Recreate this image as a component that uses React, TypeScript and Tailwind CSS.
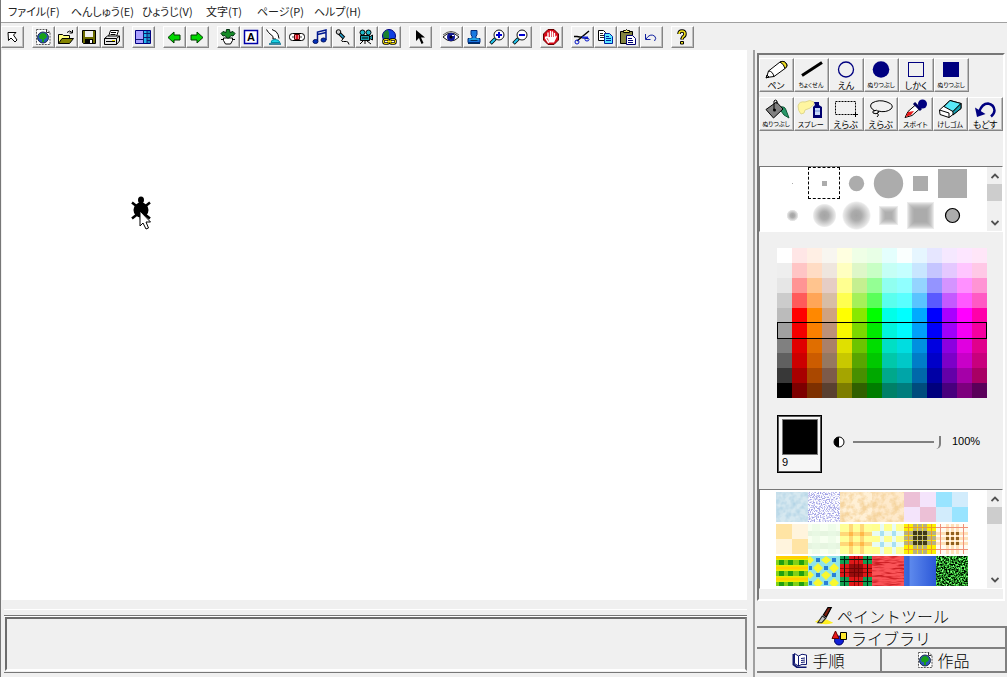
import React, { useState } from "react";

const RAISED =
  "border border-white border-r-[#858585] border-b-[#858585] bg-[#f0f0f0] shadow-[inset_-1px_-1px_0_#bdbdbd] flex items-center justify-center pr-[1px]";

const menus = [
  { label: "ファイル(F)", width: "w-[63px]" },
  { label: "へんしゅう(E)", width: "w-[71px]" },
  { label: "ひょうじ(V)", width: "w-[64px]" },
  { label: "文字(T)", width: "w-[51px]" },
  { label: "ページ(P)", width: "w-[57px]" },
  { label: "ヘルプ(H)", width: "w-[60px]" },
];

const globePage = (
  <>
    <path d="M1.500 .5h10.500l3 3v12h-13.500z" fill="#fff" stroke="#555" strokeDasharray="2 1" />
    <path d="M11.500 .5v3h3" fill="none" stroke="#333" />
    <circle cx="8" cy="8.500" r="5.500" fill="#2858b8" stroke="#203050" />
    <path d="M4 8c0-2 2-4 4-4s4 2 4 4l-2 2H9v3H7v-3H5z" fill="#18a018" />
  </>
);

const magnifier = (
  <>
    <path d="M1.500 14.500L6.500 9.500" stroke="#000" strokeWidth="3.500" />
    <path d="M2 14L6 10" stroke="#22c8f0" strokeWidth="2" />
    <circle cx="10" cy="6" r="5" fill="#fff" stroke="#111" />
  </>
);

// toolbar groups, separated by small gaps
const toolbar: { name: string; icon: React.ReactNode }[][] = [
  [
    {
      name: "うら画面",
      icon: <path d="M4 3.500h8l-2.500 2.500 3.500 5-2 2-4-4-2.500 2.500z" fill="#fff" stroke="#000" />,
    },
  ],
  [
    { name: "新しい作品", icon: globePage },
    {
      name: "ひらく",
      icon: (
        <>
          <path d="M.5 14.500v-9h4l1 1h6v3" fill="#ffff80" stroke="#000" />
          <path d="M.5 14.500l3.500-5h11.500l-4 5z" fill="#848400" stroke="#000" />
          <path d="M9 3.500q3-3 5 0M14.500 1v3h-3" fill="none" stroke="#000" />
        </>
      ),
    },
    {
      name: "ほぞん",
      icon: (
        <>
          <path d="M1.500 1.500h13v13h-12l-1-1z" fill="#6b6b00" stroke="#000" />
          <path d="M4 2h8v6H4z" fill="#f0f0f0" />
          <path d="M4 10h8v5H4z" fill="#000" />
          <path d="M9 11h2v3H9z" fill="#fff" />
        </>
      ),
    },
    {
      name: "いんさつ",
      icon: (
        <>
          <path d="M4.500 7.500l2-6h8l-2 6" fill="#fff" stroke="#000" />
          <path d="M7 3.500h5M6.500 5.500h5" stroke="#000" />
          <path d="M.5 9.500l3-2.500h12v5l-3 3.500H.5z" fill="#e8e8e8" stroke="#000" />
          <path d="M.5 9.500h12v6M12.500 9.500l3-2.500M2 12.500h9" fill="none" stroke="#000" />
          <path d="M8 11h3v1H8z" fill="#e8d800" />
        </>
      ),
    },
  ],
  [
    {
      name: "画面の配置",
      icon: (
        <>
          <path d="M.5 1.500h15v13H.5z" fill="#aaa0ff" stroke="#000080" />
          <path d="M9 2h3v12H9z" fill="#20b8f0" />
          <path d="M12 2h3v12h-3z" fill="#1888c0" />
          <path d="M8.500 2v12M12 2v12M1 10.500h8M9 4.500h6M9 8.500h6M12 11.500h3" stroke="#101870" />
        </>
      ),
    },
  ],
  [
    { name: "まえのページ", icon: <path d="M2 8.500l6-5.500v3h6v5H8v3z" fill="#00d800" stroke="#003800" /> },
    { name: "つぎのページ", icon: <path d="M14 8.500L8 3v3H2v5h6v3z" fill="#00d800" stroke="#003800" /> },
  ],
  [
    {
      name: "タートル",
      icon: (
        <>
          <path d="M3.500 9h9v2.500l-2 3.500h-5l-2-3.500z" fill="#fff" stroke="#000" />
          <path d="M1 10.500h3M12 10.500h3" stroke="#000" />
          <path d="M6.500 .5h3l.5 3 3-1 2 2-2 2.500-2-.5L9 9H7L5 6.500 3 7 1 4.500l2-2 3 1z" fill="#168c28" stroke="#003010" />
        </>
      ),
    },
    {
      name: "テキスト",
      icon: (
        <>
          <path d="M1.500 1.500h13v13h-13z" fill="#fff" stroke="#0000a8" strokeWidth="1.500" />
          <text x="8" y="12" textAnchor="middle" fontSize="11" fontWeight="bold" className="font-['Liberation_Sans',sans-serif]">
            A
          </text>
        </>
      ),
    },
    {
      name: "ボタン",
      icon: (
        <>
          <path d="M2 0l-1 3 7 7h3l2-2-1-4-4-4z" fill="#fff" />
          <path d="M.5 .5l2 3 4.500 4v2.500h3M6 .5l4 2 2 3 1 4" fill="none" stroke="#000" />
          <path d="M5 13.500q0-3 4-3t5 3z" fill="#20d8e8" stroke="#0090a8" />
          <path d="M3 15h12" stroke="#006888" strokeWidth="1.500" />
        </>
      ),
    },
    {
      name: "スライダー",
      icon: (
        <>
          <rect x=".5" y="4.500" width="15" height="7" rx="3" fill="#fff" stroke="#000" />
          <path d="M3 8h10" stroke="#444" />
          <path d="M5.500 5.500h5v5h-5z" fill="#fff" stroke="#500" />
          <path d="M6.500 6h3v4h-3z" fill="#e01020" />
        </>
      ),
    },
    {
      name: "メロディー",
      icon: (
        <>
          <path d="M5.500 12V3l8.500-2v10M5.500 5.500L14 3.500" fill="none" stroke="#001890" strokeWidth="1.500" />
          <ellipse cx="3.500" cy="12.500" rx="2.500" ry="2" fill="#0030b8" stroke="#001060" />
          <ellipse cx="11.500" cy="11" rx="2.500" ry="2" fill="#0030b8" stroke="#001060" />
        </>
      ),
    },
    {
      name: "ろくおん",
      icon: (
        <>
          <path d="M4 4l5 5" stroke="#000" strokeWidth="3.500" />
          <path d="M5 5l3.500 3.500" stroke="#28a8d8" strokeWidth="1.500" />
          <circle cx="3.500" cy="3" r="2.300" fill="#ccc" stroke="#000" />
          <path d="M8.500 9.500q-4 3 0 3h3q2 0 2.500 3" fill="none" stroke="#000" />
        </>
      ),
    },
    {
      name: "ビデオ",
      icon: (
        <>
          <path d="M2.500 6.500h9v5h-9zM11.500 8l3-2v5l-3-1.500" fill="#189cac" stroke="#000" />
          <circle cx="4.500" cy="3.500" r="2.500" fill="#20b8c8" stroke="#000" />
          <circle cx="10.500" cy="3.500" r="2.500" fill="#20b8c8" stroke="#000" />
          <path d="M5 12l-3 3M7 12v3M9 12l4 3M4 9h6" stroke="#000" />
        </>
      ),
    },
    {
      name: "リンク",
      icon: (
        <>
          <circle cx="8" cy="7" r="6.500" fill="#1040e0" stroke="#000080" />
          <path d="M2 7q0-5 5-6l1 3v5l-3 2z" fill="#188030" />
          <rect x="2.500" y="10.500" width="5.500" height="4" rx="1.500" fill="#fff" stroke="#000" strokeWidth="2.500" />
          <rect x="9" y="10.500" width="5.500" height="4" rx="1.500" fill="#fff" stroke="#000" strokeWidth="2.500" />
          <rect x="2.500" y="10.500" width="5.500" height="4" rx="1.500" fill="none" stroke="#f0d800" />
          <rect x="9" y="10.500" width="5.500" height="4" rx="1.500" fill="none" stroke="#f0d800" />
          <path d="M6 12.500h5" stroke="#ffe800" />
        </>
      ),
    },
  ],
  [{ name: "やじるし", icon: <path d="M4 1v11l3-3 2.500 6 2-1L9 8.500h4z" fill="#000" /> }],
  [
    {
      name: "目",
      icon: (
        <>
          <path d="M0 8q8-8 16 0-8 8-16 0z" fill="#fff" stroke="#111" />
          <path d="M0 6q8-7 16 0" fill="none" stroke="#555" />
          <circle cx="8" cy="8" r="4" fill="#101898" />
          <circle cx="8" cy="8" r="1.500" fill="#000" />
          <path d="M9 6h2v1H9z" fill="#fff" />
        </>
      ),
    },
    {
      name: "スタンプ",
      icon: (
        <>
          <path d="M5 1.500h6v4l-1 2v2h4v4H2v-4h4v-2l-1-2z" fill="#1878e0" stroke="#002878" />
          <path d="M2 14.500h12M4.500 11.500h7" stroke="#003060" />
          <path d="M3 10h10" stroke="#28c8e8" />
        </>
      ),
    },
    {
      name: "かくだい",
      icon: (
        <>
          {magnifier}
          <path d="M10 3v6M7 6h6" stroke="#0000d0" strokeWidth="2" />
        </>
      ),
    },
    {
      name: "しゅくしょう",
      icon: (
        <>
          {magnifier}
          <path d="M7 6h6" stroke="#0000d0" strokeWidth="2" />
        </>
      ),
    },
  ],
  [
    {
      name: "すべてとめる",
      icon: (
        <>
          <path d="M5 .5h6L15.500 5v6L11 15.500H5L.5 11V5z" fill="#d80818" stroke="#600" />
          <path
            d="M5.500 13.500L2.500 9q0-2 2.500 0V4M7.500 9V2.500M9.500 9V3M11.500 9V4.500"
            fill="none"
            stroke="#fff"
            strokeWidth="1.400"
            strokeLinecap="round"
          />
          <path d="M4.500 8h7.500l1-1.500q1.500 0 .5 2L11 13.500H6z" fill="#fff" />
        </>
      ),
    },
  ],
  [
    {
      name: "きりとり",
      icon: (
        <>
          <path d="M15 2L3 12M0 7.500h3l11 2" fill="none" stroke="#000" strokeWidth="1.500" />
          <path d="M8 8.500h6" stroke="#1828d8" strokeWidth="2" />
          <circle cx="3" cy="13" r="2" fill="none" stroke="#0010c8" />
          <ellipse cx="13" cy="10.500" rx="2" ry="1.500" fill="none" stroke="#0010c8" />
        </>
      ),
    },
    {
      name: "コピー",
      icon: (
        <>
          <path d="M1.500 1.500h5l2 2v8h-7z" fill="#fff" stroke="#000" />
          <path d="M3 4.500h3M3 6.500h4M3 8.500h4" stroke="#222" />
          <path d="M7.500 4.500h5l3 3v7h-8z" fill="#58e8ff" stroke="#0020a0" />
          <path d="M9 7.500h3M9 9.500h5M9 11.500h5" stroke="#0020a0" />
        </>
      ),
    },
    {
      name: "はりつけ",
      icon: (
        <>
          <path d="M.5 2.500h12v12H.5z" fill="#848440" stroke="#000" />
          <path d="M3.500 3.500h6v-2h-2l-1-1-1 1h-2z" fill="#f0e860" stroke="#000" />
          <path d="M6.500 6.500h6l3 3v6h-9z" fill="#fff" stroke="#000070" />
          <path d="M8 9.500h4M8 11.500h5M8 13.500h5" stroke="#000070" />
        </>
      ),
    },
    {
      name: "もとにもどす",
      icon: <path d="M2.500 5v5.500h5M3 10q4-6 8.500-3 2.500 2 0 5" fill="none" stroke="#1020a0" />,
    },
  ],
  [
    {
      name: "ヘルプ",
      icon: (
        <>
          <path d="M5 5q0-3 3-3t3 3q0 2-2 3l-1 2v.5" fill="none" stroke="#000" strokeWidth="3.500" />
          <path d="M5 5q0-3 3-3t3 3q0 2-2 3l-1 2" fill="none" stroke="#f8e820" strokeWidth="1.500" />
          <path d="M6.500 12.500h3v2.500h-3z" fill="#f8e820" stroke="#000" />
        </>
      ),
    },
  ],
];

// drawn in a 28x20 box above the label
const tools: { label: string; size: string; icon: React.ReactNode }[][] = [
  [
    {
      label: "ペン",
      size: "text-[9px]",
      icon: (
        <>
          <path d="M4.500 17.500l2-6.500L18 2q5-2 7 3 0 2-2 3.500L12 16.500z" fill="#fff" stroke="#000" />
          <path d="M18 2q5-2 7 3 0 2-2 3.500-1-4.500-5-6.500z" fill="#f0e020" stroke="#000" />
          <path d="M6.500 11q4 0 5.500 5.500M4 18l1-3 2 2z" stroke="#000" fill="none" />
        </>
      ),
    },
    { label: "ちょくせん", size: "text-[6px]", icon: <path d="M5 15.500L25 2.500" stroke="#000" strokeWidth="3" /> },
    {
      label: "えん",
      size: "text-[9px]",
      icon: <circle cx="14" cy="9.500" r="7.500" fill="none" stroke="#000080" strokeWidth="1.300" />,
    },
    { label: "ぬりつぶし", size: "text-[6px]", icon: <circle cx="14" cy="9.500" r="8.300" fill="#000080" /> },
    {
      label: "しかく",
      size: "text-[9px]",
      icon: <rect x="6.500" y="2.500" width="15" height="14" fill="none" stroke="#000080" />,
    },
    { label: "ぬりつぶし", size: "text-[6px]", icon: <rect x="6" y="2" width="16" height="15" fill="#000080" /> },
  ],
  [
    {
      label: "ぬりつぶし",
      size: "text-[6px]",
      icon: (
        <>
          <path d="M18 8q5-1 6 3l3 8-5-3-3-4z" fill="#289868" stroke="#105838" />
          <path d="M4 10.500L14.500 3 21 10l-9.500 9z" fill="#808080" stroke="#000" />
          <path d="M12 11V2q1-2 3 0v3" fill="none" stroke="#000" />
          <circle cx="12.500" cy="11" r="1.500" />
        </>
      ),
    },
    {
      label: "スプレー",
      size: "text-[7px]",
      icon: (
        <>
          <path d="M17 3Q13 0 8 3 2 2 1 7q0 5 3 8 4 0 4-4 6-1 9-6z" fill="#fff6a0" stroke="#e0d890" />
          <path d="M17 3h5v3l3 2v11h-9V8l2-2z" fill="#000070" />
          <path d="M18 9h5v7h-5z" fill="#c8d8f8" />
          <path d="M18 12h5" stroke="#7090d8" />
        </>
      ),
    },
    {
      label: "えらぶ",
      size: "text-[9px]",
      icon: (
        <>
          <rect x="3.500" y="2.500" width="20" height="13" fill="none" stroke="#000" strokeDasharray="2 1" />
          <path d="M21 15.500h5M23.500 13v5" stroke="#000" />
        </>
      ),
    },
    {
      label: "えらぶ",
      size: "text-[9px]",
      icon: (
        <>
          <path d="M8 12Q1 8 5 4q7-4 15-1 8 3 4 7-5 4-13 2" fill="none" stroke="#000" />
          <path d="M6 12q4-2 6 1-3 3-6 1 0-2 0-2zM10 14q3 2 0 4" fill="none" stroke="#000" />
        </>
      ),
    },
    {
      label: "スポイト",
      size: "text-[7px]",
      icon: (
        <>
          <path d="M4 18.500l3-6 8-7 4 4-8 7z" fill="#fff" stroke="#000" />
          <path d="M4.500 18l2.500-5 6-1-3 4z" fill="#e81818" />
          <path d="M13 4l7 7" stroke="#000060" strokeWidth="3" />
          <circle cx="21.500" cy="5" r="4.500" fill="#000080" />
        </>
      ),
    },
    {
      label: "けしゴム",
      size: "text-[7px]",
      icon: (
        <>
          <path d="M3.500 11L14 1.500l11 3v5L13 18.500l-9-3z" fill="#fff" stroke="#000" />
          <path d="M8 7.500l6-6 11 3-8 8z" fill="#58e8f8" stroke="#000" />
          <path d="M17 12.500l8-8v5l-8 6.500z" fill="#18a0b0" stroke="#000" />
          <path d="M3.500 11l9.500 3v4.500" fill="none" stroke="#000" />
        </>
      ),
    },
    {
      label: "もどす",
      size: "text-[9px]",
      icon: (
        <>
          <path d="M8 13Q11 4.500 17 4.500q6 1 6.500 7 0 3-3.500 6" fill="none" stroke="#000080" strokeWidth="2.500" />
          <path d="M4 8.500l2 9.500 8.500-3z" fill="#000080" />
        </>
      ),
    },
  ],
];

// one entry per palette row, light to dark
const palette = [
  "ffffff ffe6e6 ffefe4 f8f6f0 ffffe0 efffe6 e8ffe6 e4fffd fafffe e6f6ff e6e6ff f5e8ff fde6ff ffe6f8",
  "eeeeee ffc5c5 ffdcc4 efe6de ffffc0 def7c8 c8ffc5 c5fff5 c5ffff c8e6ff c5c5ff e4c8ff ffc5ff ffc8e6",
  "e6e6e6 ff9494 ffc48e e6cdc5 ffff90 c5ef90 94ff94 90fff0 90ffff 94d4ff 9494ff d494ff ff90ff ff94d4",
  "cccccc ff5a5a ffa557 d8bda5 ffff50 a5f05a 5aff5a 5affee 5affff 5ac4ff 5a5aff c45aff ff5aff ff5ac4",
  "bbbbbb ff0000 ff8800 cfa280 ffff00 88e800 00ff00 00ffe8 00ffff 00aaff 0000ff aa00ff ff00ff ff00aa",
  "a0a0a0 f50000 fa8000 bd9178 f8f800 7cd800 00ea00 00f5dd 00fcff 00a0fa 0000fa a000fa f500f5 f500a0",
  "808080 e00000 e06e00 aa8068 e0e000 6cc400 00dd00 00dfc4 00dde0 0090e0 0000e0 8c00e0 e000e0 e0008c",
  "606060 cc0000 cc5c00 967860 c8c800 58a500 00c800 00c8aa 00c8c8 007dc8 0000c8 7c00c8 c800c8 c8007d",
  "383838 a80000 aa4800 7d5a4a a5a500 488f00 00a800 00a88c 00a5a8 0068aa 0000a5 6400a8 a500a8 a80064",
  "000000 7d0000 7d3000 5a4030 7d7d00 306000 007d00 008068 007d7d 004c7d 00007d 48007d 7d007d 5a005a",
].map((row) => row.split(" ").map((c) => "#" + c));

const GRAY = "#acacac";

const brushes: React.ReactNode[] = [
  <rect x="16" y="16" width="1" height="1" fill={GRAY} />,
  <rect x="14" y="14" width="5" height="5" fill={GRAY} />,
  <circle cx="16.500" cy="16.500" r="7.700" fill={GRAY} />,
  <circle cx="16.500" cy="16.500" r="14.700" fill={GRAY} />,
  <rect x="9" y="9" width="15" height="15" fill={GRAY} />,
  <rect x="2" y="2" width="29" height="29" fill={GRAY} />,
  <circle cx="16.500" cy="16.500" r="6" fill="url(#soft)" />,
  <circle cx="16.500" cy="16.500" r="12" fill="url(#soft)" />,
  <circle cx="16.500" cy="16.500" r="14.500" fill="url(#soft)" />,
  <SoftSquare sizes={[19, 17, 15, 13, 11, 9, 7]} />,
  <SoftSquare sizes={[27, 25, 23, 21, 19, 17, 15, 13]} />,
  <circle cx="16.500" cy="16.500" r="7" fill={GRAY} stroke="#000" strokeWidth="1.200" />,
];

function SoftSquare({ sizes }: { sizes: number[] }) {
  return (
    <>
      {sizes.map((s) => (
        <rect key={s} x={16.5 - s / 2} y={16.5 - s / 2} width={s} height={s} fill="#999" opacity="0.2" />
      ))}
    </>
  );
}

function Checker({ a, b }: { a: string; b: string }) {
  return (
    <>
      <rect width="32" height="30" fill={b} />
      <path d="M0 0h16v15H0zM16 15h16v15H16z" fill={a} />
    </>
  );
}

function Noise({ base, id }: { base: string; id: string }) {
  return (
    <>
      <rect width="32" height="30" fill={base} />
      <rect width="32" height="30" filter={`url(#${id})`} />
    </>
  );
}

const patterns: { name: string; art: React.ReactNode }[] = [
  { name: "みず", art: <Noise base="#d6e8f0" id="cloud" /> },
  { name: "つぶつぶ", art: <Noise base="#ffffff" id="speckle" /> },
  { name: "かみ", art: <Noise base="#fff0d6" id="paper" /> },
  { name: "すな", art: <Noise base="#feeacc" id="paper" /> },
  { name: "ピンクチェック", art: <Checker a="#ecc0d6" b="#f4e4fb" /> },
  { name: "みずいろチェック", art: <Checker a="#99e4ff" b="#d2ecfc" /> },
  { name: "クリームチェック", art: <Checker a="#ffe4a4" b="#fff4dd" /> },
  {
    name: "うすみどり",
    art: (
      <>
        <rect width="32" height="30" fill="#f7fff0" />
        <path d="M0 7h32v5H0zM0 19h32v6H0z" fill="#e6f5e0" />
        <path d="M4 0h8v30H4zM20 0h8v30h-8z" fill="#eafae4" opacity="0.600" />
      </>
    ),
  },
  {
    name: "きいろチェック",
    art: (
      <>
        <rect width="32" height="30" fill="#ffff98" />
        <path d="M0 8h32v4H0zM0 18h32v4H0zM9 0h4v30H9zM20 0h4v30h-4z" fill="#ffd878" />
        <path d="M9 8h4v4H9zM20 8h4v4h-4zM9 18h4v4H9zM20 18h4v4h-4z" fill="#ffb848" />
      </>
    ),
  },
  {
    name: "レモンチェック",
    art: (
      <>
        <rect width="32" height="30" fill="#ffff90" />
        <path d="M0 7h32v5H0zM0 18h32v5H0zM8 0h4v30H8zM20 0h4v30h-4z" fill="#e8fbf4" />
        <path d="M8 7h4v5H8zM20 7h4v5h-4zM8 18h4v5H8zM20 18h4v5h-4z" fill="#a8e0f4" />
      </>
    ),
  },
  {
    name: "タータンきいろ",
    art: (
      <>
        <rect width="32" height="30" fill="#fcf000" />
        <path d="M0 7h32v4H0zM0 12h32v4H0zM0 17h32v4H0zM9 0h4v30H9zM14 0h4v30h-4zM19 0h4v30h-4z" fill="#b8b080" />
        <path
          d="M9 7h4v4H9zM14 7h4v4h-4zM19 7h4v4h-4zM9 12h4v4H9zM14 12h4v4h-4zM19 12h4v4h-4zM9 17h4v4H9zM14 17h4v4h-4zM19 17h4v4h-4z"
          fill="#403c14"
        />
        <path d="M0 3.500h32M0 25.500h32M4.500 0v30M27.500 0v30" stroke="#f0a020" />
      </>
    ),
  },
  {
    name: "タータンしろ",
    art: (
      <>
        <rect width="32" height="30" fill="#fffaf0" />
        <path d="M0 8h32v3H0zM0 13h32v3H0zM0 18h32v3H0zM10 0h3v30h-3zM15 0h3v30h-3zM20 0h3v30h-3z" fill="#ffe0b8" />
        <path
          d="M10 8h3v3h-3zM15 8h3v3h-3zM20 8h3v3h-3zM10 13h3v3h-3zM15 13h3v3h-3zM20 13h3v3h-3zM10 18h3v3h-3zM15 18h3v3h-3zM20 18h3v3h-3z"
          fill="#906020"
        />
        <path d="M0 3.500h32M0 25.500h32M4.500 0v30M27.500 0v30" stroke="#f09078" />
      </>
    ),
  },
  {
    name: "みどりチェック",
    art: (
      <>
        <rect width="32" height="30" fill="#e8f000" />
        <path d="M0 4h32v5H0zM0 15h32v5H0zM0 26h32v4H0z" fill="#80d018" />
        <path
          d="M3 4h5v5H3zM12 4h5v5h-5zM23 4h5v5h-5zM3 15h5v5H3zM12 15h5v5h-5zM23 15h5v5h-5zM3 26h5v4H3zM12 26h5v4h-5zM23 26h5v4h-5z"
          fill="#20a010"
        />
        <path d="M0 1.500h32M0 12h32M0 23h32" stroke="#ffd000" strokeWidth="3" />
      </>
    ),
  },
  {
    name: "ひしがた",
    art: (
      <>
        <rect width="32" height="30" fill="#90e4e8" />
        <path
          d="M2 0l4 4-4 4-4-4zM10 7l5 5-5 5-5-5zM18 0l5 4-5 4-5-4zM26 7l5 5-5 5-5-5zM2 15l4 4-4 4-4-4zM18 15l5 4-5 5-5-5zM10 22l5 5-5 5-5-5zM26 22l5 5-5 5-5-5z"
          fill="#f8f830"
        />
        <path d="M8 2h4v4H8zM24 2h4v4h-4zM1 10h3v4H1zM16 10h4v4h-4zM8 17h4v4H8zM24 17h4v4h-4zM1 25h3v4H1zM16 25h4v4h-4z" fill="#2880d8" />
      </>
    ),
  },
  {
    name: "タータンあか",
    art: (
      <>
        <rect width="32" height="30" fill="#10a050" />
        <path d="M0 8h32v13H0zM9 0h14v30H9z" fill="#e01818" />
        <path d="M9 8h14v13H9z" fill="#980c0c" />
        <path d="M0 3.500h32M0 25.500h32M4.500 0v30M27.500 0v30" stroke="#002010" />
        <path d="M0 12.500h32M0 16.500h32M14.500 0v30M18.500 0v30" stroke="#500" opacity="0.600" />
      </>
    ),
  },
  { name: "あかいぬの", art: <Noise base="#fa5458" id="cloth" /> },
  { name: "あおグラデーション", art: <rect width="32" height="30" fill="url(#blueFade)" /> },
  { name: "しばふ", art: <Noise base="#208020" id="grass" /> },
];

// gradients and texture filters shared by the brush and pattern lists
function Defs() {
  return (
    <svg className="absolute h-0 w-0" aria-hidden="true">
      <defs>
        <radialGradient id="soft">
          <stop offset="0" stopColor="#a4a4a4" />
          <stop offset="0.350" stopColor="#acacac" />
          <stop offset="0.900" stopColor="#e8e8e8" />
          <stop offset="1" stopColor="#fff" />
        </radialGradient>
        <linearGradient id="blueFade">
          <stop offset="0" stopColor="#3c6cdc" />
          <stop offset="0.150" stopColor="#3464d8" />
          <stop offset="0.200" stopColor="#5c88ec" />
          <stop offset="1" stopColor="#2c58d8" />
        </linearGradient>
        <filter id="cloud" x="0" y="0" width="1" height="1" colorInterpolationFilters="sRGB">
          <feTurbulence type="fractalNoise" baseFrequency="0.200" numOctaves="2" />
          <feColorMatrix values="0 0 0 0 0.700 0 0 0 0 0.830 0 0 0 0 0.900 2 0 0 0 -0.700" />
        </filter>
        <filter id="speckle" x="0" y="0" width="1" height="1" colorInterpolationFilters="sRGB">
          <feTurbulence type="fractalNoise" baseFrequency="0.800" numOctaves="2" />
          <feColorMatrix values="0 0 0 0 0.640 0 0 0 0 0.640 0 0 0 0 0.900 5 0 0 0 -2.200" />
        </filter>
        <filter id="paper" x="0" y="0" width="1" height="1" colorInterpolationFilters="sRGB">
          <feTurbulence type="fractalNoise" baseFrequency="0.150" numOctaves="3" />
          <feColorMatrix values="0 0 0 0 0.960 0 0 0 0 0.830 0 0 0 0 0.620 3 0 0 0 -1.200" />
        </filter>
        <filter id="cloth" x="0" y="0" width="1" height="1" colorInterpolationFilters="sRGB">
          <feTurbulence type="fractalNoise" baseFrequency="0.080 0.500" numOctaves="2" />
          <feColorMatrix values="0 0 0 0 0.800 0 0 0 0 0.120 0 0 0 0 0.140 4 0 0 0 -1.800" />
        </filter>
        <filter id="grass" x="0" y="0" width="1" height="1" colorInterpolationFilters="sRGB">
          <feTurbulence type="fractalNoise" baseFrequency="0.600" numOctaves="2" />
          <feColorMatrix values="1.500 0 0 0 -0.600 3 0 0 0 -1 1.500 0 0 0 -0.600 0 0 0 0 1" />
        </filter>
      </defs>
    </svg>
  );
}

function ScrollBar({ label }: { label: string }) {
  return (
    <div className="flex w-[15px] shrink-0 flex-col bg-[#f0f0f0]" role="group" aria-label={label}>
      <button aria-label="うえへ" className="flex h-[17px] items-center justify-center">
        <svg className="h-2 w-2" viewBox="0 0 8 8">
          <path d="M.5 6L4 2.500 7.500 6" fill="none" stroke="#505050" strokeWidth="1.800" />
        </svg>
      </button>
      <div className="flex-1">
        <div className="h-[17px] bg-[#cdcdcd]" />
      </div>
      <button aria-label="したへ" className="flex h-[17px] items-center justify-center">
        <svg className="h-2 w-2" viewBox="0 0 8 8">
          <path d="M.5 2L4 5.500 7.500 2" fill="none" stroke="#505050" strokeWidth="1.800" />
        </svg>
      </button>
    </div>
  );
}

function Toolbar() {
  return (
    <div className="flex h-[28px] gap-2 border-t border-[#a0a0a0] pt-[3px]">
      {toolbar.map((group, i) => (
        <div key={i} className="flex">
          {group.map((item) => (
            <button key={item.name} aria-label={item.name} className={`${RAISED} h-[22px] w-[23px]`}>
              <svg className="h-4 w-4" viewBox="0 0 16 16">
                {item.icon}
              </svg>
            </button>
          ))}
        </div>
      ))}
    </div>
  );
}

function PaintPanel() {
  const [brush, setBrush] = useState(1);
  const [row, setRow] = useState(5);
  const [color, setColor] = useState("#000000");
  const [opacity, setOpacity] = useState(100);

  return (
    <section className="mt-[3px] mr-[2px] flex flex-1 flex-col border-2 border-t-[#777] border-r-white border-b-white border-l-[#777]">
      <div className="mt-[3px] flex flex-col gap-[5px]">
        {tools.map((line, i) => (
          <div key={i} className="flex">
            {line.map((tool, j) => (
              <button key={j} className={`${RAISED} h-[34px] w-[35px] flex-col justify-between py-[1px] whitespace-nowrap`}>
                <svg className="h-5 w-7 shrink-0" viewBox="0 0 28 20">
                  {tool.icon}
                </svg>
                <span className={`${tool.size} flex h-[10px] items-center leading-none text-black [font-feature-settings:'palt']`}>
                  {tool.label}
                </span>
              </button>
            ))}
          </div>
        ))}
      </div>

      <div className="mt-[35px] flex h-[66px] justify-between border border-t-[#777] border-r-white border-b-white border-l-[#777] bg-white">
        <div className="ml-4 grid grid-cols-6 content-start">
          {brushes.map((shape, i) => (
            <button
              key={i}
              aria-label={`ブラシ${i + 1}`}
              onClick={() => setBrush(i)}
              className={`h-8 w-8 ${brush === i ? "outline-1 -outline-offset-1 outline-black outline-dashed" : ""}`}
            >
              <svg className="h-8 w-8" viewBox="0 0 32 32">
                {shape}
              </svg>
            </button>
          ))}
        </div>
        <ScrollBar label="ブラシのスクロール" />
      </div>

      <div className="mt-4 ml-[18px] flex flex-col self-start">
        {palette.map((colors, i) => (
          <div key={i} className="relative flex">
            {colors.map((c, j) => (
              <button
                key={j}
                aria-label={c}
                className="h-[15px] w-[15px]"
                style={{ backgroundColor: c }}
                onClick={() => {
                  setRow(i);
                  setColor(c);
                }}
              />
            ))}
            {row === i && <div className="pointer-events-none absolute inset-x-0 -inset-y-px z-10 border border-black" />}
          </div>
        ))}
      </div>

      <div className="mt-[17px] ml-[18px] flex items-start font-['Liberation_Sans',sans-serif] text-[11px] text-black">
        <div className="h-[58px] w-[45px] border border-black bg-[#f6f6f6] p-[3px] shadow-[inset_0_0_0_1px_#555]">
          <div className="mx-auto h-[36px] w-[36px] border border-[#777]" style={{ backgroundColor: color }} />
          <div className="pl-[1px] leading-[14px]">9</div>
        </div>
        <div className="ml-[11px] flex h-[53px] items-center">
          <svg className="h-3 w-3 shrink-0" viewBox="0 0 12 12">
            <circle cx="6" cy="6" r="5" fill="#fff" stroke="#000" />
            <path d="M6 1a5 5 0 0 0 0 10z" />
          </svg>
          <input
            type="range"
            aria-label="とうめいど"
            min={0}
            max={100}
            value={opacity}
            onChange={(e) => setOpacity(Number(e.target.value))}
            className="ml-2 h-4 w-[88px] appearance-none bg-transparent [&::-webkit-slider-runnable-track]:h-[2px] [&::-webkit-slider-runnable-track]:bg-[#808080] [&::-webkit-slider-thumb]:-mt-[5px] [&::-webkit-slider-thumb]:h-[13px] [&::-webkit-slider-thumb]:w-[7px] [&::-webkit-slider-thumb]:appearance-none [&::-webkit-slider-thumb]:rounded-br-[5px] [&::-webkit-slider-thumb]:border-r-2 [&::-webkit-slider-thumb]:border-[#808080] [&::-webkit-slider-thumb]:bg-[#f0f0f0]"
          />
          <span className="ml-[11px]">{opacity}%</span>
        </div>
      </div>

      <div className="mt-4 flex h-[100px] justify-between border border-t-[#777] border-r-white border-b-white border-l-[#777] bg-white">
        <div className="mt-[2px] ml-4 grid grid-cols-6 content-start gap-y-[2px]">
          {patterns.map((p) => (
            <button key={p.name} aria-label={p.name} className="h-[30px] w-8">
              <svg className="h-[30px] w-8" viewBox="0 0 32 30">
                {p.art}
              </svg>
            </button>
          ))}
        </div>
        <ScrollBar label="もようのスクロール" />
      </div>
    </section>
  );
}

function PanelTabs() {
  const tab =
    "flex items-center justify-center border-b-2 border-[#808080] text-base leading-none font-light text-black";
  return (
    <nav className="flex flex-col">
      <button className={`${tab} h-[27px] gap-1 pt-1`}>
        <svg className="h-[18px] w-[18px]" viewBox="0 0 16 16">
          <path d="M1 13q6-4 14 1-7 2-14-1z" fill="#ffee20" stroke="#ffee20" />
          <path d="M2.500 14l4-6 3 2-3.500 4z" fill="#c0c0c0" stroke="#222" />
          <path d="M7.500 7l4-6.500h3l-4.500 8.500z" fill="#802010" stroke="#000" />
        </svg>
        ペイントツール
      </button>
      <button className={`${tab} h-[21px] gap-1 border-r-2 pt-[1px]`}>
        <svg className="h-4 w-4" viewBox="0 0 16 16">
          <circle cx="8" cy="10.500" r="4.500" fill="#1020d8" stroke="#000060" />
          <path d="M4.500 1L1 8.500h7z" fill="#e81818" stroke="#600" />
          <path d="M9.500 2.500h6v7h-6z" fill="#ffe830" stroke="#000" />
        </svg>
        ライブラリ
      </button>
      <div className="flex">
        <button className={`${tab} h-6 flex-1 gap-1 border-r-2`}>
          <svg className="h-4 w-4" viewBox="0 0 16 16">
            <path d="M1.500 2v10.500l4 3h9" fill="none" stroke="#101870" strokeWidth="2" />
            <path d="M2.500 1.500l4 2.500v10l-4-2.500zM6.500 4q3-3 8-1v9.500q-5-1-8 1.500z" fill="#fff" stroke="#101870" />
            <path d="M9 6.500l4-.5M9 8.500l4-.5M9 10.500l4-.5" stroke="#101870" />
          </svg>
          手順
        </button>
        <button className={`${tab} h-6 flex-1 gap-1 border-r-2`}>
          <svg className="h-4 w-4" viewBox="0 0 16 16">
            {globePage}
          </svg>
          作品
        </button>
      </div>
    </nav>
  );
}

export default function App() {
  return (
    <div className="flex min-h-screen flex-col border-l border-[#777] bg-[#f0f0f0] font-['Noto_Sans_CJK_JP',sans-serif]">
      <Defs />
      <nav className="flex h-[22px] items-center bg-white pl-[7px] text-[11px] leading-none whitespace-nowrap text-[#222] [font-feature-settings:'palt']">
        {menus.map((m) => (
          <button key={m.label} className={`${m.width} h-full text-left`}>
            {m.label}
          </button>
        ))}
      </nav>
      <Toolbar />

      <div className="flex flex-1">
        <main className="mr-[6px] flex min-w-0 flex-1 flex-col">
          <div className="relative ml-[1px] flex-1 bg-white">
            <svg className="absolute top-[146px] left-[128px] h-9 w-6" viewBox="0 0 24 36">
              <ellipse cx="11" cy="14" rx="7.500" ry="7.500" />
              <ellipse cx="11" cy="4" rx="3" ry="3.500" />
              <path d="M2 6.500l5 4M20 6.500l-5 4M2 22.500l5-4M20 22.500l-5-4M11 21v2.500" stroke="#000" strokeWidth="2.500" />
              <path d="M10 15v15l3-3 3 6 2.500-1-2.500-6h4.500z" fill="#fff" stroke="#000" />
            </svg>
          </div>
          <div className="mt-[9px] ml-[3px] border-t border-b border-t-white border-b-[#777] pb-[1px]">
            <div className="mt-[5px] border-t border-b border-t-[#777] border-b-white" />
            <div className="pl-[1px]">
              <textarea
                aria-label="コマンドセンター"
                className="block h-[54px] w-full resize-none border-2 border-t-[#6c6c6c] border-r-[#888] border-b-white border-l-[#6c6c6c] bg-[#f0f0f0] text-xs outline-none"
              />
            </div>
          </div>
          <div className="h-1" />
        </main>

        <aside className="flex w-[254px] shrink-0 flex-col border-l-2 border-l-[#a0a0a0] pl-[2px]">
          <PaintPanel />
          <PanelTabs />
          <div className="h-1" />
        </aside>
      </div>
    </div>
  );
}
